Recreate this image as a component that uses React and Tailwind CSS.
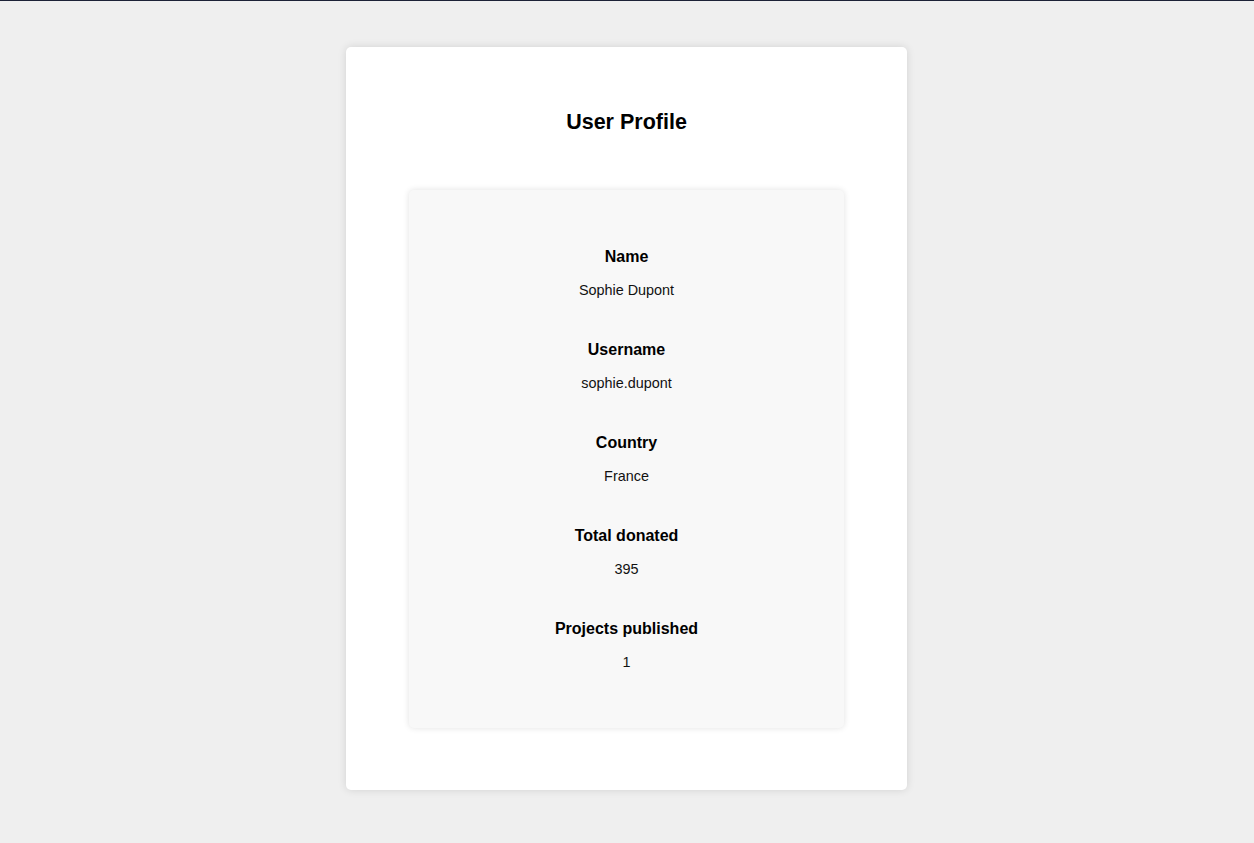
export default function App() {
  const items = [
    ["Name", "Sophie Dupont"],
    ["Username", "sophie.dupont"],
    ["Country", "France"],
    ["Total donated", "395"],
    ["Projects published", "1"],
  ];
  return (
    <div
      className="min-h-screen bg-[#efefef] border-t border-[#1c2237]"
      style={{ fontFamily: '"Liberation Sans", Arial, sans-serif' }}
    >
      <div className="flex justify-center pt-[46px] pb-[53px] pr-px">
        <div className="w-[561px] bg-white rounded-[5px] shadow-[0_0_8px_rgba(0,0,0,0.12)] px-[63px] pt-[61px] pb-[62px]">
          <h1 className="text-center text-[21.5px] leading-[28px] font-bold text-black">User Profile</h1>
          <div className="mt-[54px] bg-[#f8f8f8] rounded-[5px] shadow-[0_0_6px_rgba(0,0,0,0.12)] pt-[58px] pb-[58px] flex flex-col items-center">
            {items.map(([label, value], i) => (
              <div key={label} className={"flex flex-col items-center " + (i > 0 ? "mt-[43px]" : "")}>
                <div className="text-[16px] leading-[18px] font-bold text-black">{label}</div>
                <div className="mt-[16px] text-[14.4px] leading-[16px] text-[#111]">{value}</div>
              </div>
            ))}
          </div>
        </div>
      </div>
    </div>
  );
}
